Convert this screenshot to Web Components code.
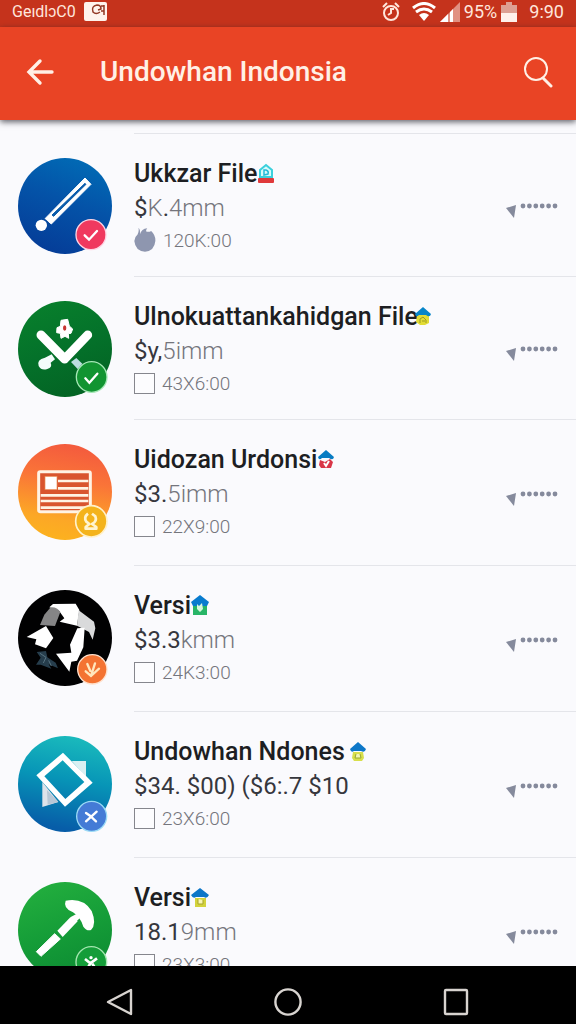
<!DOCTYPE html>
<html lang="id">
<head>
<meta charset="utf-8">
<meta name="viewport" content="width=device-width, initial-scale=1">
<title>Undowhan Indonsia</title>
<style>
  body {
    margin: 0;
    height: 100vh;
    display: flex;
    flex-direction: column;
    overflow: hidden;
    background: #fafafd;
    font-family: Roboto, "Liberation Sans", sans-serif;
  }
  b { font-weight: 400; color: #36373d; }
  .files {
    flex: 1;
    min-height: 0;
    overflow: hidden;
    padding-top: 13px;
  }
</style>
</head>
<body>
<status-bar>
  <span>GeıdlɔC0</span>
  <span slot="battery">95%</span>
  <span slot="clock">9:90</span>
</status-bar>
<app-toolbar>Undowhan Indonsia</app-toolbar>

<main class="files">
  <file-row dense style="--avatar: linear-gradient(200deg, #0070b8, #0453a8 45%, #053894)">
    <svg slot="glyph" viewBox="53 54 282 288">
      <path d="M254 114L272 133L153 252L134 236Z" fill="#fff" stroke="#fff" stroke-width="3"/>
      <path d="M254 130L257 133L160 229L155 225Z" fill="#0a5cab" stroke="#0a5cab" stroke-width="3"/>
      <circle cx="123" cy="256" r="17" fill="#fff"/>
      <path d="M133 238Q146 244 144 256" fill="none" stroke="#0a4a9c" stroke-width="3"/>
      <circle cx="272" cy="284" r="45" fill="#f0395f" stroke="#ffd5e4" stroke-width="4"/>
      <path d="M253 286L266 299L290 273" fill="none" stroke="#fff" stroke-width="7" stroke-linecap="round"/>
    </svg>
    Ukkzar File
    <svg slot="mark" viewBox="0 0 18 21">
      <path d="M3 14V7L9 2L15 7V14Z" fill="#d8fafa" stroke="#3bd0dc" stroke-width="2"/>
      <path d="M7 7H9Q12 8 11 11L7 12Z" fill="none" stroke="#24b9d8" stroke-width="1.5"/>
      <rect x="1" y="15" width="16" height="5" rx="1" fill="#e0393b"/>
    </svg>
    <span slot="size"><b>$</b>K<b>.</b>4mm</span>
    <svg slot="lead" width="22" height="24" viewBox="400 270 68 74">
      <path d="M414 269Q420 275 419 289Q423 273 441 271Q436 276 438 281Q447 283 453 279Q467 292 466 310Q463 341 434 343Q404 341 401 310Q402 297 411 290Q416 282 414 269Z" fill="#8e96af"/>
    </svg>
    <span slot="time">120K:00</span>
  </file-row>

  <file-row dense style="--avatar: linear-gradient(160deg, #08812c, #04712a 50%, #036022)">
    <svg slot="glyph" viewBox="53 48 282 288">
      <path d="M154 208L134 218Q108 224 115 243Q123 258 141 252Q157 247 151 233L164 223Z" fill="#f4fbfb"/>
      <path d="M212 231L228 219L246 236L232 252Z" fill="#bcdde0"/>
      <path d="M122 150L193 222L262 150" fill="none" stroke="#fff" stroke-width="27" stroke-linecap="round" stroke-linejoin="round"/>
      <path d="M182 106L202 103L207 123L217 132L212 145L204 146L205 160L194 154L182 160L180 145L169 143L170 128L180 124Z" fill="#fff" stroke="#fff" stroke-width="3"/>
      <ellipse cx="193" cy="129" rx="5" ry="8" fill="#c73532"/>
      <circle cx="274" cy="276" r="46" fill="#119431" stroke="#a5e7b6" stroke-width="4"/>
      <path d="M255 280L267 293L291 266" fill="none" stroke="#fff" stroke-width="7" stroke-linecap="round"/>
    </svg>
    Ulnokuattankahidgan File
    <svg slot="mark" class="tuck" viewBox="0 0 18 21">
      <path d="M3 9H15V17L11 19H6L2 16Z" fill="#e2dc35"/>
      <path d="M6 17V13L9 11L12 14V17M8 15H11" fill="none" stroke="#9c9a20" stroke-width="1"/>
      <path d="M9 1L17 8Q16 12 12 9H5Q2 12 1 8Z" fill="#0785c8"/>
    </svg>
    <span slot="size"><b>$y,</b>5imm</span>
    <span slot="time">43X6:00</span>
  </file-row>

  <file-row style="--avatar: linear-gradient(190deg, #f2553f, #fa7438 38%, #fca726 75%, #fcb51c)">
    <svg slot="glyph" viewBox="53 44 282 288">
      <rect x="115" y="127" width="155" height="120" rx="5" fill="#d9552e" stroke="#fff3e4" stroke-width="9"/>
      <path d="M173 155H264M173 177H264M121 198H264M121 215H264M121 235H264" stroke="#fff3e4" stroke-width="8"/>
      <rect x="134" y="141" width="36" height="40" fill="#fff" stroke="#e98a50" stroke-width="2"/>
      <circle cx="273" cy="276" r="47" fill="#f4b31b" stroke="#fff1c9" stroke-width="5"/>
      <path d="M263 253Q249 264 258 277L267 284L256 293V298H288V293L275 284Q291 277 285 261L275 253" fill="none" stroke="#fff4cf" stroke-width="8" stroke-linejoin="round"/>
    </svg>
    Uidozan Urdonsi
    <svg slot="mark" viewBox="0 0 18 21">
      <path d="M3 11L8 13L13 10L16 13L14 19H4L2 16Z" fill="#d93648"/>
      <path d="M7 14L9 17L12 12" fill="none" stroke="#fff" stroke-width="2"/>
      <path d="M9 1L17 8Q16 12 12 9H5Q2 12 1 8Z" fill="#087cc3"/>
    </svg>
    <span slot="size"><b>$3.</b>5imm</span>
    <span slot="time">22X9:00</span>
  </file-row>

  <file-row style="--avatar: #010102">
    <svg slot="glyph" viewBox="53 46 282 288">
      <path d="M147 98L158 88L226 87L237 106L230 153L178 141L192 131L176 108Z" fill="#fff"/>
      <path d="M151 98Q170 96 180 112L164 154L119 151L132 120Z" fill="#858586"/>
      <path d="M235 107L281 141L285 161L277 195L266 172L230 153Z" fill="#d9dadb"/>
      <path d="M79 187L137 154L159 190L137 221L104 209L108 194Z" fill="#fff"/>
      <path d="M231 161L253 159L249 218L230 258L213 261L207 291L167 237L213 234L209 210Z" fill="#fff"/>
      <path d="M109 232L137 229L141 248L166 264L173 281L145 269L153 282L121 270L107 270L121 249Z" fill="#263d4c"/>
      <path d="M119 236L137 248L129 265M145 257L153 274" stroke="#577381" stroke-width="3" fill="none"/>
      <circle cx="276" cy="284" r="44" fill="#f47332" stroke="#ffe2ce" stroke-width="4"/>
      <path d="M261 268L270 289M284 266L272 304M296 282L272 304L256 290" fill="none" stroke="#ffe7bd" stroke-width="7" stroke-linecap="round"/>
    </svg>
    Versi
    <svg slot="mark" viewBox="0 0 18 21">
      <path d="M2 8H16V20H2Z" fill="#28b567"/>
      <path d="M9 0L18 7L16 11H2L0 7Z" fill="#087bce"/>
      <path d="M6 9L8 11L11 8L12 14L9 17L6 14Z" fill="#d8f7dc"/>
    </svg>
    <span slot="size"><b>$3.3</b>kmm</span>
    <span slot="time">24K3:00</span>
  </file-row>

  <file-row style="--avatar: linear-gradient(190deg, #1dc0bd, #0795b7 45%, #075da8 90%)">
    <svg slot="glyph" viewBox="53 46 282 288">
      <path d="M214 121H257V168Z" fill="#d9f0f2"/>
      <path d="M126 184L174 244L126 259Z" fill="#dde3ea"/>
      <path d="M140 208L174 244L142 252Z" fill="#b7c7d6"/>
      <path fill-rule="evenodd" d="M188 96L277 186L194 258L108 164ZM187 119L132 167L195 235L252 184Z" fill="#fff"/>
      <circle cx="274" cy="287" r="45" fill="#447bd6" stroke="#9bdaf5" stroke-width="4"/>
      <path d="M257 277L269 285L287 302M289 273L257 302" fill="none" stroke="#fff" stroke-width="7" stroke-linecap="round"/>
    </svg>
    Undowhan Ndones
    <svg slot="mark" class="apart" viewBox="0 0 18 21">
      <path d="M4 11H14L15 17L13 20H5L3 17Z" fill="#d8df4b"/>
      <path d="M7 13L6 17H12L11 13" fill="#f3f5b4" stroke="#98a72f" stroke-width="1"/>
      <path d="M9 1L17 8Q16 12 12 10H5Q2 12 1 8Z" fill="#0d77c8"/>
    </svg>
    <span slot="size"><b>$34. $00) ($6:.7 $10</b></span>
    <span slot="time">23X6:00</span>
  </file-row>

  <file-row style="--avatar: linear-gradient(160deg, #25b13f, #159d38 50%, #0b8731)">
    <svg slot="glyph" viewBox="53 52 282 288">
      <path d="M108 261L163 207L180 223L122 275Z" fill="#fff" stroke="#fff" stroke-width="3"/>
      <path d="M171 198L210 158L232 170L187 217Z" fill="#fff"/>
      <path d="M196 108Q249 98 274 139Q290 178 272 196Q259 200 249 186Q241 158 218 143Q187 130 196 108Z" fill="#fff"/>
      <path d="M210 158L228 148L241 158L226 173Z" fill="#fff"/>
      <circle cx="273" cy="292" r="46" fill="#149d39" stroke="#a4e6b0" stroke-width="4"/>
      <path d="M254 283L270 296L290 281M270 296L260 314M276 297L287 314" fill="none" stroke="#fff" stroke-width="8"/>
      <circle cx="272" cy="279" r="5" fill="#fff"/>
    </svg>
    Versi
    <svg slot="mark" viewBox="0 0 18 21">
      <path d="M4 11H15V20H4Z" fill="#d3d33c"/>
      <path d="M7 12V17H12V13" fill="#f8f6b2" stroke="#a7a42b" stroke-width="1"/>
      <path d="M9 1L18 8Q16 12 13 10H5Q2 12 0 8Z" fill="#0d77c8"/>
    </svg>
    <span slot="size"><b>18.1</b>9mm</span>
    <span slot="time">23X3:00</span>
  </file-row>
</main>

<system-nav></system-nav>

<script>
class StatusBar extends HTMLElement {
  constructor() {
    super();
    this.attachShadow({ mode: 'open' });
    this.shadowRoot.innerHTML = `
      <style>
        :host {
          display: flex;
          align-items: center;
          justify-content: space-between;
          height: 27px;
          padding: 0 12px;
          box-sizing: border-box;
          background: #c5331c;
          color: #ffe6dc;
          font-size: 16px;
          line-height: 22px;
        }
        div { display: flex; align-items: center; height: 22px; margin-bottom: 4px; }
        svg { display: block; }
        .left { gap: 8px; }
        .right { gap: 4px; font-size: 18px; }
        .alarm { margin-right: 8px; }
        .clock { margin-left: 8px; }
      </style>
      <div class="left">
        <slot></slot>
        <svg width="23" height="19" viewBox="0 0 23 19">
          <rect width="23" height="19" rx="2" fill="#fff3ec"/>
          <path d="M16 10Q12 13 9 10Q7 4 13 3Q17 3 17 7L14 8M20 3V13M20 4H17M17 9H20" fill="none" stroke="#923824" stroke-width="1.5"/>
        </svg>
      </div>
      <div class="right">
        <svg class="alarm" width="18" height="20" viewBox="0 0 18 20" fill="none" stroke="#ffe6dc" stroke-width="2">
          <circle cx="9" cy="11" r="7"/>
          <path d="M1 5L5 1M13 1L17 5M9 6V11L6 13M9 7H12"/>
        </svg>
        <svg width="24" height="19" viewBox="0 0 24 19">
          <path d="M12 19L7 13Q12 9 17 13Z" fill="#fff"/>
          <path d="M4 10Q12 4 20 10M1 6Q12-3 23 6" fill="none" stroke="#fff" stroke-width="3"/>
        </svg>
        <svg width="20" height="20" viewBox="0 0 20 20">
          <path d="M0 20L20 0V20Z" fill="#e19182"/>
          <path d="M0 20L8 12V20ZM10 10L13 7V20H10Z" fill="#fff"/>
        </svg>
        <slot name="battery"></slot>
        <svg width="16" height="20" viewBox="0 0 16 20">
          <path d="M5 0H11V3H16V11H0V3H5Z" fill="#dda093"/>
          <path d="M0 11H16V20H0Z" fill="#fff1eb"/>
        </svg>
        <span class="clock"><slot name="clock"></slot></span>
      </div>
    `;
  }
}

class AppToolbar extends HTMLElement {
  constructor() {
    super();
    this.attachShadow({ mode: 'open' });
    this.shadowRoot.innerHTML = `
      <style>
        :host {
          display: flex;
          align-items: center;
          height: 93px;
          padding: 0 14px 4px 16px;
          box-sizing: border-box;
          position: relative;
          background: #e94425;
          color: #fff0e6;
          box-shadow: 0 2px 6px rgba(30, 30, 40, 0.7);
        }
        button {
          width: 48px;
          height: 48px;
          padding: 0;
          border: none;
          background: none;
          display: grid;
          place-items: center;
          cursor: pointer;
        }
        h1 {
          flex: 1;
          margin: 0 0 0 36px;
          font-size: 28px;
          line-height: 40px;
          font-weight: 500;
        }
        svg { display: block; fill: none; stroke: #fff0e6; stroke-linecap: round; }
      </style>
      <button aria-label="Back">
        <svg width="28" height="28" viewBox="0 0 28 28" stroke-width="3.4">
          <path d="M14 3L3 14L14 25M4 14H26"/>
        </svg>
      </button>
      <h1><slot></slot></h1>
      <button aria-label="Search">
        <svg width="30" height="32" viewBox="0 0 30 32" stroke-width="2">
          <circle cx="13" cy="13" r="11"/>
          <path d="M20 22L28 30" stroke-width="3"/>
        </svg>
      </button>
    `;
  }
}

class FileRow extends HTMLElement {
  constructor() {
    super();
    this.attachShadow({ mode: 'open' });
    this.shadowRoot.innerHTML = `
      <style>
        :host {
          display: flex;
          gap: 22px;
          min-height: 146px;
          padding-left: 18px;
          color: #74757c;
        }
        :host([dense]) { min-height: 143px; }
        .avatar {
          flex: none;
          width: 94px;
          height: 96px;
          margin-top: 25px;
          border-radius: 50%;
          background: var(--avatar);
        }
        ::slotted([slot="glyph"]) { display: block; width: 94px; height: 96px; overflow: visible; }
        .body {
          flex: 1;
          min-width: 0;
          display: flex;
          align-items: center;
          justify-content: space-between;
          padding-right: 16px;
          border-top: 1px solid #e4e5ea;
        }
        .text { align-self: flex-start; padding-top: 22px; }
        h2 {
          display: flex;
          align-items: center;
          margin: 0;
          font-size: 25px;
          line-height: 35px;
          font-weight: 500;
          color: #1d1e22;
          white-space: nowrap;
        }
        ::slotted([slot="mark"]) { width: 18px; height: 21px; flex: none; }
        ::slotted(.tuck) { margin-left: -4px; }
        ::slotted(.apart) { margin-left: 4px; }
        .size {
          font-size: 24px;
          line-height: 35px;
          font-weight: 300;
          white-space: nowrap;
        }
        .meta {
          display: flex;
          align-items: center;
          gap: 7px;
          height: 28px;
          font-size: 19px;
          font-weight: 300;
        }
        input {
          appearance: none;
          display: block;
          width: 21px;
          height: 21px;
          margin: 0;
          border: 1px solid #85868d;
          background: #fcfcfe;
        }
        input:checked { background: #85868d; }
        button {
          padding: 10px 0 0;
          border: none;
          background: none;
          cursor: pointer;
        }
        button svg { display: block; fill: #858a9c; }
      </style>
      <div class="avatar"><slot name="glyph"></slot></div>
      <div class="body">
        <div class="text">
          <h2><slot></slot><slot name="mark"></slot></h2>
          <div class="size"><slot name="size"></slot></div>
          <div class="meta">
            <slot name="lead"><input type="checkbox" id="pick"></slot>
            <label for="pick"><slot name="time"></slot></label>
          </div>
        </div>
        <button aria-label="More">
          <svg width="54" height="18" viewBox="0 0 54 18">
            <path d="M0 7L10 4L8 17Z"/>
            <circle cx="17" cy="5" r="2.4"/>
            <circle cx="23.4" cy="5" r="2.4"/>
            <circle cx="29.8" cy="5" r="2.4"/>
            <circle cx="36.2" cy="5" r="2.4"/>
            <circle cx="42.6" cy="5" r="2.4"/>
            <circle cx="49" cy="5" r="2.4"/>
          </svg>
        </button>
      </div>
    `;
  }
}

class SystemNav extends HTMLElement {
  constructor() {
    super();
    this.attachShadow({ mode: 'open' });
    this.shadowRoot.innerHTML = `
      <style>
        :host { display: block; position: relative; background: #000; }
        nav {
          display: flex;
          height: 58px;
          padding: 14px 36px 0;
          box-sizing: border-box;
        }
        button {
          flex: 1;
          height: 44px;
          padding: 0;
          border: none;
          background: none;
          display: grid;
          place-items: center;
          cursor: pointer;
        }
        svg { display: block; fill: none; stroke: #d8d4d0; stroke-width: 2.4; stroke-linejoin: round; }
      </style>
      <nav>
        <button aria-label="Back">
          <svg width="28" height="30" viewBox="0 0 28 30"><path d="M2 15L25 3V27Z"/></svg>
        </button>
        <button aria-label="Home">
          <svg width="30" height="30" viewBox="0 0 30 30"><circle cx="15" cy="15" r="12.6"/></svg>
        </button>
        <button aria-label="Recent apps">
          <svg width="26" height="28" viewBox="0 0 26 28"><rect x="2" y="2" width="22" height="24" rx="1"/></svg>
        </button>
      </nav>
    `;
  }
}

customElements.define('status-bar', StatusBar);
customElements.define('app-toolbar', AppToolbar);
customElements.define('file-row', FileRow);
customElements.define('system-nav', SystemNav);
</script>
</body>
</html>
